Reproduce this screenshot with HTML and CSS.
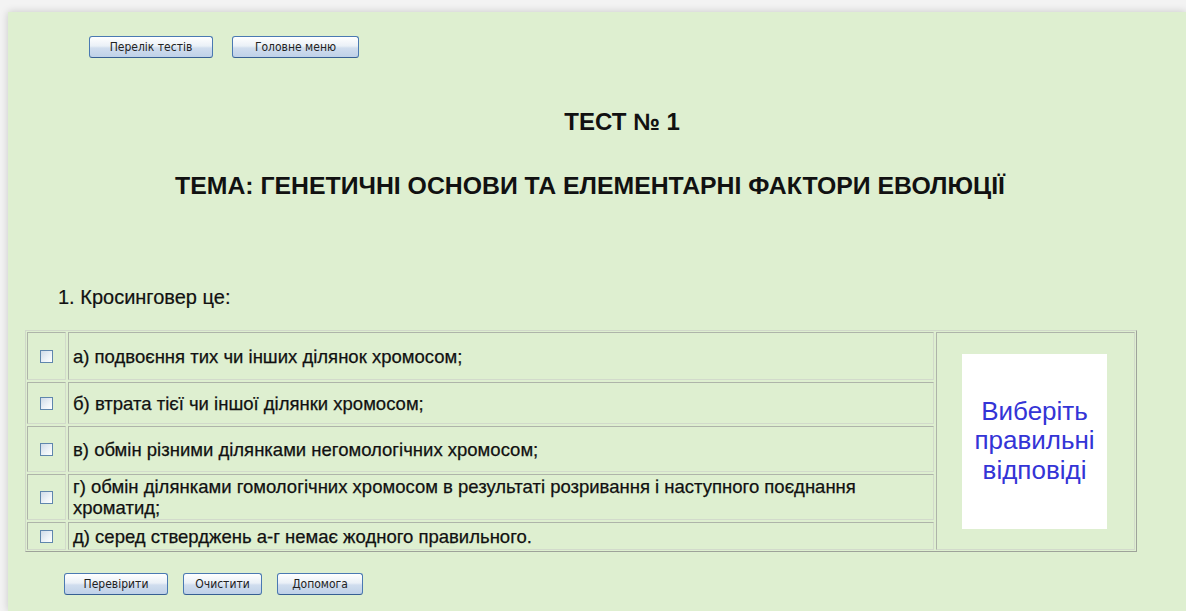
FILE: index.html
```html
<!DOCTYPE html>
<html lang="uk">
<head>
<meta charset="utf-8">
<title>Тест № 1</title>
<link rel="stylesheet" href="styles.css">
</head>
<body>
<div class="page">
  <div class="nav">
    <button class="btn btn-list">Перелік тестів</button>
    <button class="btn btn-menu">Головне меню</button>
  </div>

  <h1 class="title title-test">ТЕСТ № 1</h1>
  <h2 class="title title-topic">ТЕМА: ГЕНЕТИЧНІ ОСНОВИ ТА ЕЛЕМЕНТАРНІ ФАКТОРИ ЕВОЛЮЦІЇ</h2>

  <p class="question">1. Кросинговер це:</p>

  <div class="quiz">
    <div class="answers">
      <div class="cell cell-check row-a"><span class="check"></span></div>
      <div class="cell cell-text row-a">а) подвоєння тих чи інших ділянок хромосом;</div>
      <div class="cell cell-check row-b"><span class="check"></span></div>
      <div class="cell cell-text row-b">б) втрата тієї чи іншої ділянки хромосом;</div>
      <div class="cell cell-check row-c"><span class="check"></span></div>
      <div class="cell cell-text row-c">в) обмін різними ділянками негомологічних хромосом;</div>
      <div class="cell cell-check row-d"><span class="check"></span></div>
      <div class="cell cell-text row-d">г) обмін ділянками гомологічних хромосом в результаті розривання і наступного поєднання хроматид;</div>
      <div class="cell cell-check row-e"><span class="check"></span></div>
      <div class="cell cell-text row-e">д) серед стверджень а-г немає жодного правильного.</div>
    </div>
    <div class="cell cell-hint">
      <div class="hint">Виберіть правильні відповіді</div>
    </div>
  </div>

  <div class="actions">
    <button class="btn btn-check">Перевірити</button>
    <button class="btn btn-clear">Очистити</button>
    <button class="btn btn-help">Допомога</button>
  </div>
</div>
</body>
</html>
```

FILE: styles.css
```css
html, body {
  margin: 0;
  padding: 0;
}

body {
  background: #f3f3f3;
  font-family: "Liberation Sans", Arial, sans-serif;
  color: #111;
}

.page {
  margin: 12px 0 0 8px;
  min-height: 599px;
  box-sizing: border-box;
  background: #deefd0;
  box-shadow: 0 0 8px rgba(0, 0, 0, 0.18);
  padding-top: 24px;
}

/* buttons */
.nav {
  display: flex;
  gap: 19px;
  padding-left: 81px;
}

.btn {
  height: 22px;
  padding: 0;
  box-sizing: border-box;
  border: 1px solid #4a79b2;
  border-bottom-color: #365f93;
  border-radius: 3px;
  background: linear-gradient(to bottom, #ffffff 0%, #eaf0f7 45%, #d0ddee 55%, #bfd1e8 100%);
  font-family: "DejaVu Sans Condensed", "DejaVu Sans", sans-serif;
  font-stretch: condensed;
  font-size: 12px;
  color: #222;
  cursor: pointer;
}

.btn-list { width: 124px; }
.btn-menu { width: 127px; }
.btn-check { width: 104px; }
.btn-clear { width: 79px; }
.btn-help { width: 86px; }

/* headings */
.title {
  margin: 0;
  line-height: 28px;
  font-weight: bold;
  text-align: center;
}

.title-test {
  font-size: 24px;
  margin-top: 50px;
  padding-left: 50px;
}

.title-topic {
  font-size: 24.8px;
  margin-top: 36px;
  padding-right: 14px;
}

.question {
  margin: 85px 0 0 50px;
  font-size: 20px;
  line-height: 24px;
  -webkit-text-stroke: 0.2px #111;
}

/* answers table */
.quiz {
  display: grid;
  grid-template-columns: 1fr 199px;
  gap: 2px;
  padding: 1px;
  margin: 21px 49px 0 17px;
  border: 1px solid;
  border-color: #d0d8c9 #9ea39a #9ea39a #d0d8c9;
}

.answers {
  display: grid;
  grid-template-columns: 39px 1fr;
  grid-template-rows: 48px 42px 46px 46px 28px;
  gap: 2px;
}

.cell {
  border: 1px solid;
  border-color: #aeb4a9 #d2dacb #d2dacb #aeb4a9;
  box-sizing: border-box;
}

.cell-check {
  display: flex;
  align-items: center;
  justify-content: center;
}

.check {
  width: 13px;
  height: 13px;
  box-sizing: border-box;
  border: 1px solid #5f86ad;
  background: linear-gradient(135deg, #cfdbe8 0%, #eef3f8 60%, #ffffff 100%);
}

.cell-text {
  display: flex;
  align-items: center;
  padding: 0 60px 0 4px;
  font-size: 18.5px;
  line-height: 21px;
  -webkit-text-stroke: 0.25px #111;
}

.cell-hint {
  display: flex;
  align-items: center;
  justify-content: center;
  padding-right: 2px;
}

.hint {
  width: 145px;
  height: 175px;
  background: #fff;
  display: flex;
  align-items: center;
  justify-content: center;
  text-align: center;
  color: #3434d6;
  font-size: 26px;
  line-height: 29.5px;
}

.actions {
  display: flex;
  gap: 15px;
  padding-left: 56px;
  margin-top: 21px;
}
```
